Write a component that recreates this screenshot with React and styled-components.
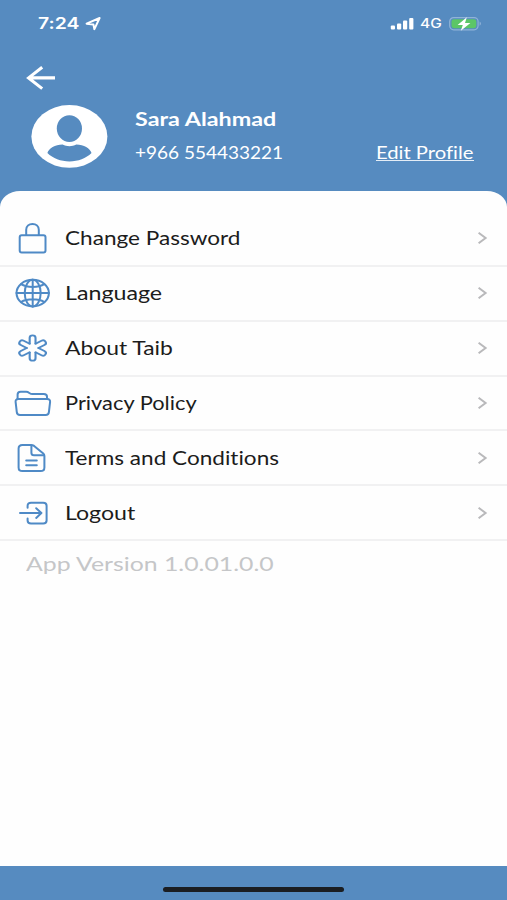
import React from "react";
import styled, {createGlobalStyle} from "styled-components";

const GlobalStyle = createGlobalStyle`
  body {
    margin: 0;
    background: #568bc0;
  }
  * {
    box-sizing: border-box;
  }
`;

const Screen = styled.div`
  width: 507px;
  height: 900px;
  display: flex;
  flex-direction: column;
  overflow: hidden;
  background: #568bc0;
  font-family: Lato, "Liberation Sans", sans-serif;
  font-variant-ligatures: none;
`;

// wide lettering: the glyphs are stretched from their left edge
const Label = styled.span`
  display: block;
  white-space: nowrap;
  transform-origin: left center;
  transform: scaleX(${({$stretch}) => $stretch || 1.2});
`;

const StatusBar = styled.div`
  height: 48px;
  padding: 0 25px 0 38px;
  display: flex;
  align-items: center;
  justify-content: space-between;
  color: #fff;
`;

const StatusGroup = styled.div`
  display: flex;
  align-items: center;
`;

const Clock = styled(Label)`
  width: 47px;
  font-family: Inter, sans-serif;
  font-size: 15.5px;
  font-weight: 600;
  line-height: 20px;
`;

const Network = styled(Label)`
  width: 28px;
  margin-left: 6px;
  margin-right: 1px;
  font-family: Inter, sans-serif;
  font-size: 12.5px;
  font-weight: 500;
  line-height: 20px;
`;

const BackButton = styled.button`
  width: 32px;
  height: 26px;
  margin: 17px 0 0 25px;
  padding: 0;
  border: 0;
  background: none;
  cursor: pointer;
`;

const Profile = styled.div`
  height: 100px;
  padding: 13px 33px 0 31px;
  display: flex;
`;

const Person = styled.div`
  flex: 1;
  margin-left: 26.5px;
  color: #fff;
`;

const Name = styled(Label)`
  margin-top: 3px;
  font-size: 18px;
  font-weight: 700;
  line-height: 24px;
`;

const Phone = styled(Label)`
  margin-top: 10px;
  font-size: 16.5px;
  line-height: 24px;
`;

const EditLink = styled.a`
  width: 98px;
  height: 20px;
  margin-top: 37px;
  border-bottom: 1px solid #e4edf6;
  color: #fff;
  font-size: 17px;
  line-height: 24px;
  cursor: pointer;
`;

const Sheet = styled.main`
  flex: 1;
  padding-top: 21px;
  border-radius: 20px 20px 0 0 / 16px 16px 0 0;
  background: #fefefe;
`;

const Row = styled.div`
  height: 54.85px;
  padding: 0 19px 0 12px;
  display: flex;
  align-items: center;
  border-bottom: 2px solid #f1f1f2;
  color: #1c1c1c;
  font-size: 18.5px;
  cursor: pointer;
`;

const RowText = styled.div`
  flex: 1;
  margin-left: 12.5px;
`;

const Version = styled(Label)`
  margin: 9px 0 0 25.5px;
  color: #c5c6c8;
  font-size: 20px;
  line-height: 26px;
`;

const BottomBar = styled.footer`
  height: 34px;
  display: flex;
  justify-content: center;
  padding-top: 21px;
`;

const HomeIndicator = styled.div`
  width: 181px;
  height: 5px;
  border-radius: 3px;
  background: #1b1e22;
`;

const RowIcon = ({children}) => (
  <svg
    width="40"
    height="36"
    viewBox="0 0 40 36"
    fill="none"
    stroke="#4f8ac6"
    strokeWidth="2"
    strokeLinecap="round"
    strokeLinejoin="round"
  >
    {children}
  </svg>
);

const LockIcon = () => (
  <RowIcon>
    <rect x="7.7" y="15.2" width="25.8" height="17.4" rx="2" />
    <path d="M14.2 15V9.8C14.2 6 17 4 20.5 4s6.3 2 6.3 5.8V15" />
  </RowIcon>
);

const GlobeIcon = () => (
  <RowIcon>
    <ellipse cx="20.7" cy="18.1" rx="16.2" ry="13.3" />
    <ellipse cx="20.7" cy="18.1" rx="8" ry="13.3" />
    <path d="M20.7 4.8v26.6M4.5 18.1h32.4M9 9.2c6 3.6 17.4 3.6 23.4 0M9 27c6-3.6 17.4-3.6 23.4 0" />
  </RowIcon>
);

const AsteriskIcon = () => (
  <RowIcon>
    <g transform="translate(20.6 18) scale(1.17 1)" strokeWidth="1.8">
      {[0, 60, 120, 180, 240, 300].map((angle) => (
        <path
          key={angle}
          transform={`rotate(${angle})`}
          d="M-2.5-4.33V-10.2a2.5 2.5 0 0 1 5 0V-4.33"
        />
      ))}
    </g>
  </RowIcon>
);

const FolderIcon = () => (
  <RowIcon>
    <path d="M5.6 14V9.6c0-2 1-2.8 3-2.8h5.6c3 0 3.2 2.3 6.2 2.3h11.4c2.2 0 3.2.8 3.2 2.6V14" />
    <path d="M6.4 14.1h28.8c2.3 0 3.1 1 2.9 2.8l-1.2 10.3c-.2 2-1.2 2.9-3.2 2.9H8c-2 0-3-.9-3.2-2.9L3.6 16.9c-.2-1.8.6-2.8 2.8-2.8z" />
  </RowIcon>
);

const DocumentIcon = () => (
  <RowIcon>
    <path d="M18.9 4.9H10.4c-2.4 0-3.8 1.2-3.8 3.6v19c0 2.4 1.4 3.6 3.8 3.6h18.2c2.4 0 3.8-1.2 3.8-3.6V15.9c0-1-.3-1.7-1.1-2.4l-9.2-7.6c-.9-.7-1.7-1-3.2-1z" />
    <path d="M19.4 5.4v7.4c0 1.8.8 2.5 2.6 2.5h10" />
    <path d="M14.2 20.4h10.6M14.2 25.3h10.6" />
  </RowIcon>
);

const LogoutIcon = () => (
  <RowIcon>
    <path d="M15.6 12.8v-2c0-2.2 1.2-3.1 3.4-3.1h12.2c2.3 0 3.4.9 3.4 3.1v14.6c0 2.2-1.1 3.1-3.4 3.1H19c-2.2 0-3.4-.9-3.4-3.1v-2" />
    <path d="M8 18.1h21.2M24.2 13.3l5.2 4.8-5.2 4.8" />
  </RowIcon>
);

const Chevron = () => (
  <svg width="12" height="16" viewBox="0 0 12 16" fill="none">
    <path d="M2.6 2.8L9.6 8l-7 5.2" stroke="#b9b9bb" strokeWidth="2" />
  </svg>
);

const Avatar = () => (
  <svg width="77" height="64" viewBox="0 0 77 64">
    <ellipse cx="38.4" cy="32.4" rx="38" ry="31.4" fill="#fff" />
    <ellipse cx="38.4" cy="24.6" rx="12.6" ry="13.4" fill="#568bc0" />
    <path
      d="M16.4 49.1c1.4-4.8 7.6-8.2 15.2-8.5 4.3 2.1 9.4 2.1 13.7 0 7.6.3 13.8 3.7 15.2 8.5-5.5 5.4-13.3 8.4-22 8.4s-16.6-3-22.1-8.4z"
      fill="#568bc0"
    />
  </svg>
);

const menu = [
  {text: "Change Password", icon: LockIcon, stretch: 1.22},
  {text: "Language", icon: GlobeIcon, stretch: 1.255},
  {text: "About Taib", icon: AsteriskIcon, stretch: 1.235},
  {text: "Privacy Policy", icon: FolderIcon, stretch: 1.18},
  {text: "Terms and Conditions", icon: DocumentIcon, stretch: 1.22},
  {text: "Logout", icon: LogoutIcon, stretch: 1.25},
];

const App = () => {
  return (
    <Screen>
      <GlobalStyle />
      <StatusBar>
        <StatusGroup>
          <Clock $stretch={1.25}>7:24</Clock>
          <svg width="17" height="16" viewBox="0 0 17 16" fill="none">
            <path
              d="M1.6 7.7L14.6 2 9.4 13.2 8.4 8.4z"
              stroke="#fff"
              strokeWidth="2"
              strokeLinejoin="round"
            />
          </svg>
        </StatusGroup>
        <StatusGroup>
          <svg width="24" height="14" viewBox="0 0 24 14" fill="#fff">
            <rect x="0.8" y="8.6" width="4.2" height="4" rx="1" />
            <rect x="7" y="6.4" width="4.2" height="6.2" rx="1" />
            <rect x="13" y="3.6" width="4.2" height="9" rx="1" />
            <rect x="19.2" y="1" width="4.2" height="11.6" rx="1" />
          </svg>
          <Network $stretch={1.24}>4G</Network>
          <svg width="33" height="16" viewBox="0 0 33 16">
            <rect x="0.7" y="1.6" width="28.4" height="12.2" rx="4" fill="none" stroke="#90b3d7" strokeWidth="1.2" />
            <rect x="2.5" y="3.2" width="24.8" height="9" rx="2.4" fill="#5cc667" />
            <path d="M30.6 5.6c1.8.8 1.8 3.4 0 4.2z" fill="#90b3d7" />
            <path d="M17.8 1.2L8.6 9h5.2l-2 5.8L21.4 7h-5.4z" fill="#fff" />
          </svg>
        </StatusGroup>
      </StatusBar>
      <BackButton aria-label="Back">
        <svg width="32" height="26" viewBox="0 0 32 26" fill="none">
          <path d="M30 12.9H3.6M17.2 2.2L3.6 12.9l13.6 10.7" stroke="#fff" strokeWidth="3.1" />
        </svg>
      </BackButton>
      <Profile>
        <Avatar />
        <Person>
          <Name $stretch={1.295}>Sara Alahmad</Name>
          <Phone $stretch={1.15}>+966 554433221</Phone>
        </Person>
        <EditLink>
          <Label $stretch={1.19}>Edit Profile</Label>
        </EditLink>
      </Profile>
      <Sheet>
        {menu.map(({text, icon: Icon, stretch}) => (
          <Row key={text}>
            <Icon />
            <RowText>
              <Label $stretch={stretch}>{text}</Label>
            </RowText>
            <Chevron />
          </Row>
        ))}
        <Version $stretch={1.24}>App Version 1.0.01.0.0</Version>
      </Sheet>
      <BottomBar>
        <HomeIndicator />
      </BottomBar>
    </Screen>
  );
};

export default App;
